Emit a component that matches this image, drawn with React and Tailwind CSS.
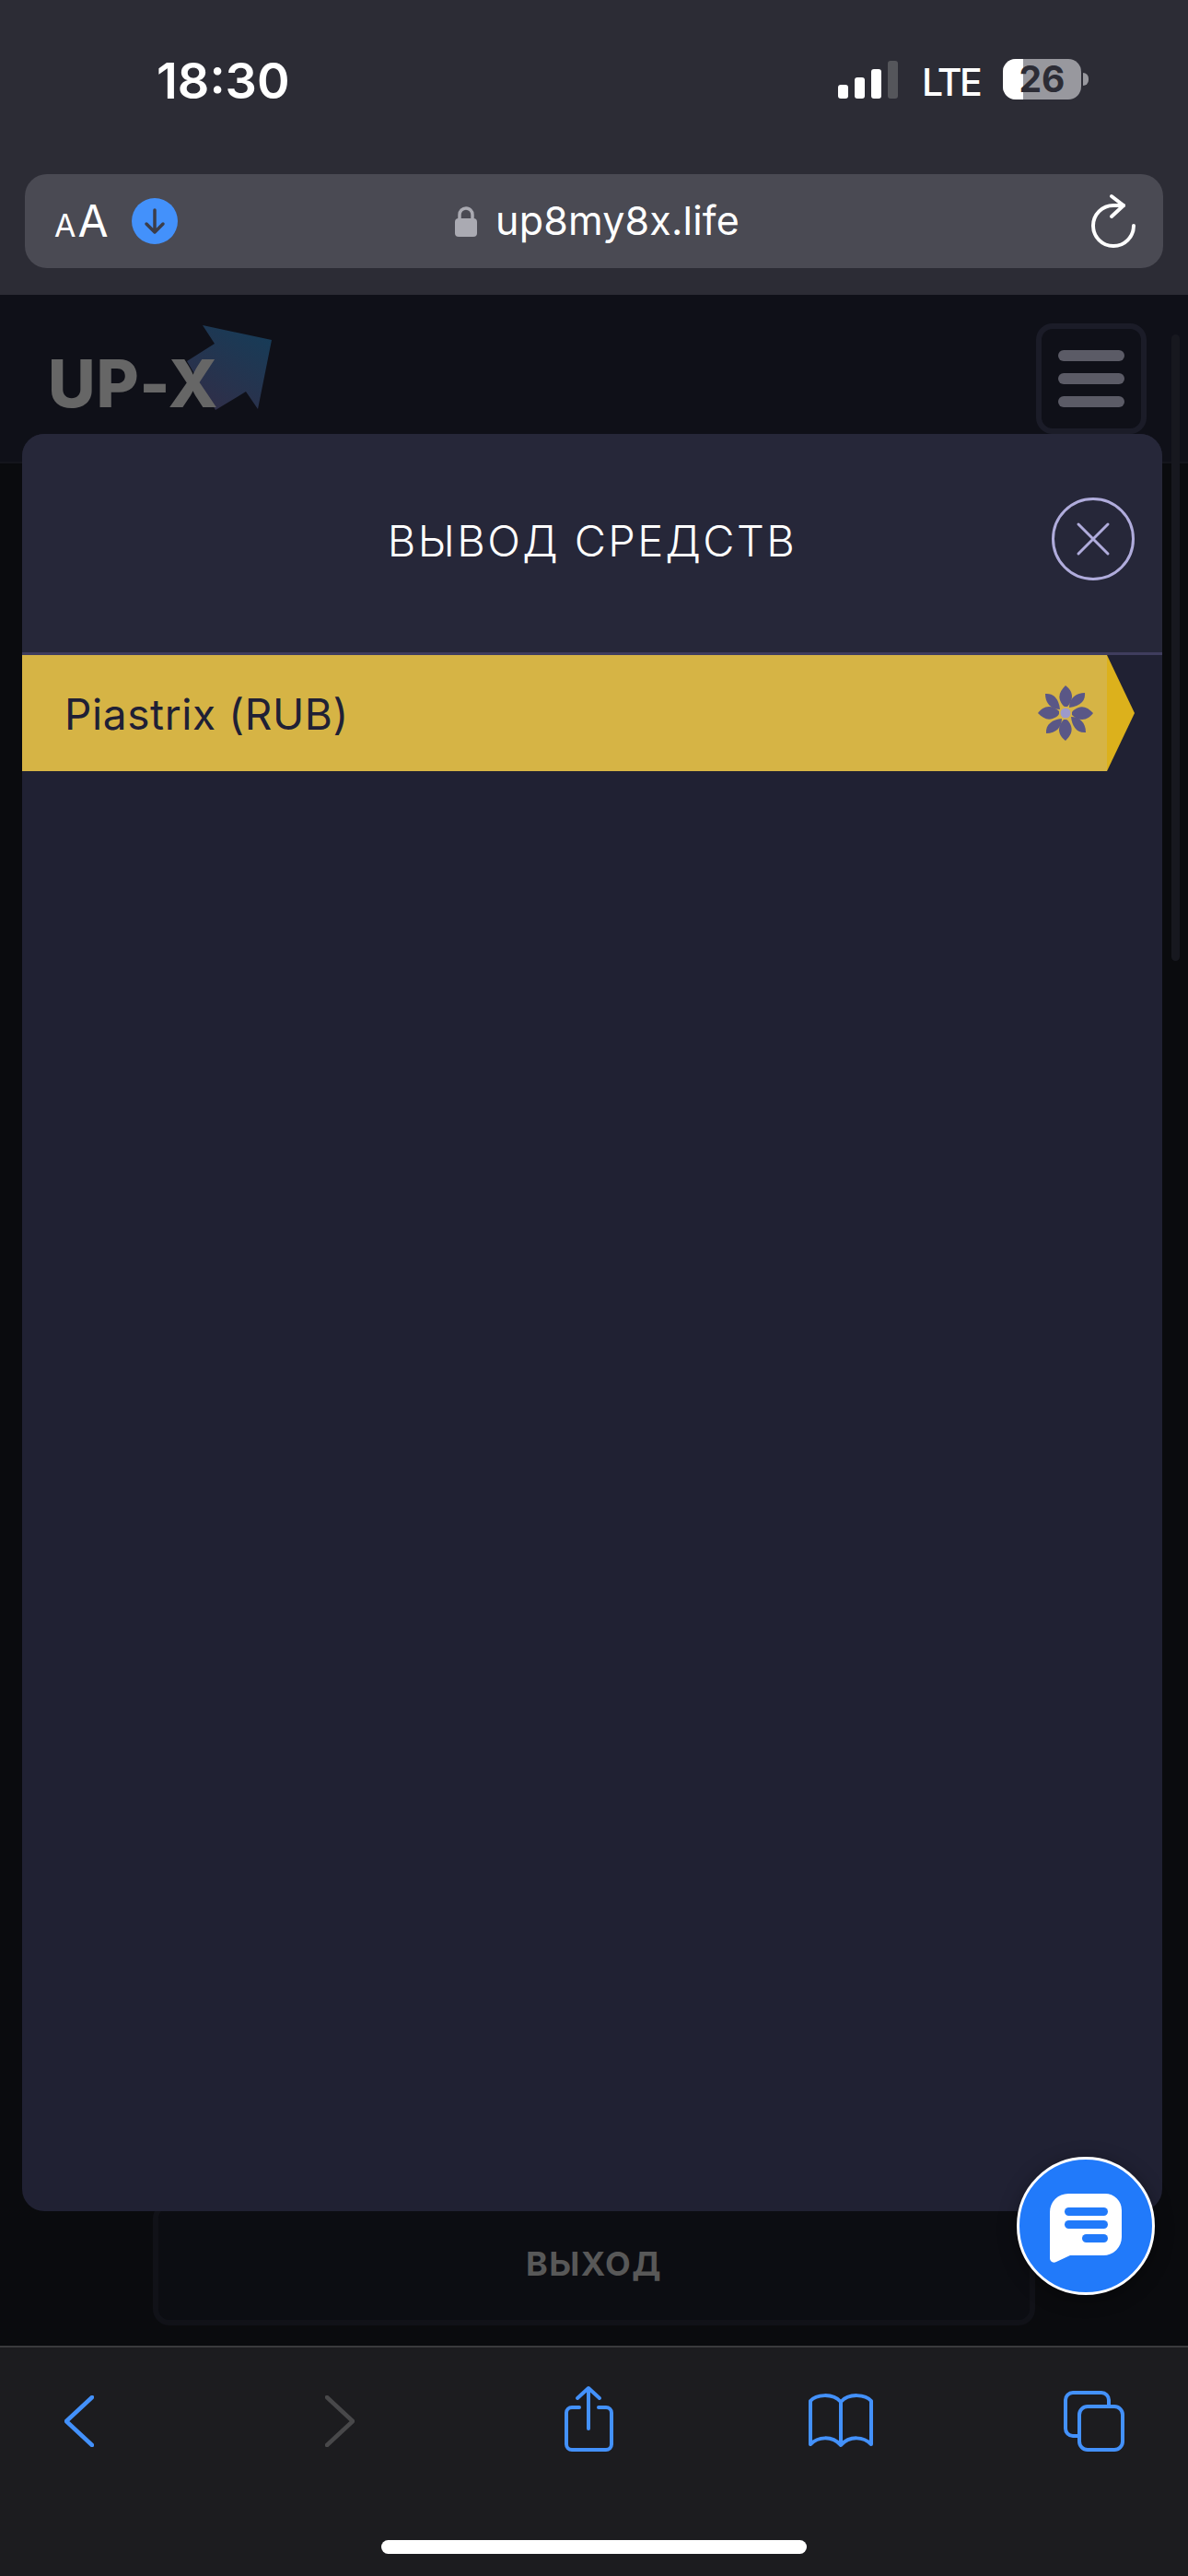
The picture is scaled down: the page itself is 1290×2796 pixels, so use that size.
const BLUE = '#4391fb';

function ReloadIcon() {
  return (
    <svg width="52" height="60" viewBox="0 0 52 60" fill="none" stroke="#fff" strokeWidth="4" strokeLinecap="round" strokeLinejoin="round">
      <path d="M46 35 A22 22 0 1 1 24 13 L35 13" />
      <path d="M22 3 L35 13 L22 25" />
    </svg>
  );
}

function StatusBar() {
  return (
    <div className="h-[189px] flex items-start text-white font-['Inter',sans-serif]">
      <div className="ml-[170px] mt-[58px] w-[143px] text-[54px] leading-[60px] font-semibold">18:30</div>

      {/* signal */}
      <div className="ml-[597px] mt-[66px] h-[41px] flex items-end gap-[7px]">
        <div className="w-[11px] h-[15px] rounded-[3px] bg-white" />
        <div className="w-[11px] h-[23px] rounded-[3px] bg-white" />
        <div className="w-[11px] h-[32px] rounded-[3px] bg-white" />
        <div className="w-[11px] h-[41px] rounded-[3px] bg-[#55565b]" />
      </div>

      <div className="ml-[26px] mt-[64px] w-[62px] text-[41px] leading-[50px] font-medium tracking-[-2.5px]">LTE</div>

      {/* battery */}
      <div className="ml-[26px] mt-[64px] flex items-center">
        <div className="relative w-[85px] h-[44px] rounded-[14px] bg-[#98989e] flex items-center justify-center">
          <div className="absolute left-0 top-0 bottom-0 w-[22px] rounded-l-[14px] bg-white" />
          <span className="relative text-[39px] leading-[44px] font-bold text-[#2c2c35]">26</span>
        </div>
        <div className="ml-[2px] w-[6px] h-[14px] rounded-r-full bg-[#98989e]" />
      </div>
    </div>
  );
}

function AddressBar() {
  return (
    <div className="mx-[27px] h-[102px] w-[1236px] rounded-[24px] bg-[#4a4a53] flex items-center text-white font-['Inter',sans-serif]">
      <div className="ml-[32px] mt-[4px] w-[60px] flex items-baseline font-normal">
        <span className="text-[34px] leading-[40px]">A</span>
        <span className="ml-[2px] text-[48px] leading-[40px]">A</span>
      </div>
      <div className="ml-[24px] w-[50px] h-[50px] rounded-full bg-[#4391fb] flex items-center justify-center">
        <svg width="26" height="30" viewBox="0 0 26 30" fill="none" stroke="#3c3d48" strokeWidth="3.5" strokeLinecap="round" strokeLinejoin="round">
          <path d="M13 3 V26 M4 18 L13 27 L22 18" />
        </svg>
      </div>
      <svg className="ml-[301px]" width="24" height="34" viewBox="0 0 24 34" fill="none">
        <path d="M5 15 V10 a7 7 0 0 1 14 0 V15" stroke="#aaaab2" strokeWidth="3.5" />
        <rect x="0" y="14" width="24" height="20" rx="4" fill="#aaaab2" />
      </svg>
      <div className="ml-[20px] text-[43px] leading-[50px] font-normal tracking-[0.2px] mt-[-2px]">up8my8x.life</div>
      <div className="ml-auto mr-[26px]">
        <ReloadIcon />
      </div>
    </div>
  );
}

function PageBehind() {
  return (
    <div className="flex-1 flex flex-col bg-[#0a0b0e]">
      <div className="h-[183px] bg-[#0f1018] border-b-2 border-[#14151c] flex items-start">
        <div className="relative ml-[52px] mt-[59px]">
          <svg className="absolute left-[149px] top-[-26px]" width="96" height="96" viewBox="0 0 96 96">
            <defs>
              <linearGradient id="logoArrow" x1="0.85" y1="0" x2="0.25" y2="1">
                <stop offset="0" stopColor="#163c58" />
                <stop offset="1" stopColor="#302e48" />
              </linearGradient>
            </defs>
            <polygon points="19,0 94,16 79,91 66,72 33,92 2,39 32,20" fill="url(#logoArrow)" />
          </svg>
          <div className="relative text-[71px] leading-[74px] font-extrabold tracking-[1px] text-[#666] font-['Inter',sans-serif]">UP-X</div>
        </div>
        <div className="ml-auto mr-[45px] mt-[31px] w-[120px] h-[120px] rounded-[18px] border-[6px] border-[#1b1c28] flex flex-col items-center justify-center gap-[13px]">
          <div className="w-[72px] h-[12px] rounded-full bg-[#5b5b66]" />
          <div className="w-[72px] h-[12px] rounded-full bg-[#5b5b66]" />
          <div className="w-[72px] h-[12px] rounded-full bg-[#5b5b66]" />
        </div>
      </div>

      <div className="mt-auto mb-[22px] ml-[166px] w-[958px] h-[134px] rounded-[18px] border-[6px] border-[#111218] bg-[#0c0d12] flex items-center justify-center">
        <span className="text-[36px] font-bold tracking-[1.5px] text-[#585858] font-['Inter',sans-serif]">ВЫХОД</span>
      </div>
    </div>
  );
}

function FlowerIcon() {
  return (
    <svg width="62" height="62" viewBox="-31 -31 62 62">
      {[0, 90, 180, 270].map((a) => (
        <g key={a} transform={`rotate(${a})`} fill="#5a5786">
          <path d="M0 -30 C-5 -25 -8 -20 -6 -14 C-5 -11 -3 -8 -1 -7 L2 -7 C5 -10 7 -14 7 -18 C7 -23 4 -27 0 -30Z" />
          <path d="M21 -22 C22 -12 14 -7 4 -6 C4 -15 10 -22 21 -22Z" />
        </g>
      ))}
      <circle r="5.5" fill="#9d9aca" />
    </svg>
  );
}

function WithdrawModal() {
  return (
    <div className="absolute left-[24px] top-[151px] w-[1238px] h-[1929px] rounded-[24px] overflow-hidden bg-[#202133] flex flex-col">
      <div className="relative h-[237px] bg-[#262739] flex items-center justify-center">
        <h2 className="mt-[-5px] text-[47px] font-light text-white tracking-[2.4px] font-['Inter',sans-serif]">ВЫВОД СРЕДСТВ</h2>
        <button className="absolute right-[30px] top-[69px] w-[90px] h-[90px] rounded-full border-[3px] border-[#b0acdc] flex items-center justify-center">
          <svg width="38" height="38" viewBox="0 0 38 38" stroke="#b0acdc" strokeWidth="3" strokeLinecap="round">
            <path d="M3 3 L35 35 M35 3 L3 35" />
          </svg>
        </button>
      </div>
      <div className="h-[3px] bg-[#3f3d5e]" />
      <div className="flex h-[126px]">
        <div className="w-[1178px] bg-[#d6b445] flex items-center pl-[46px] pr-[14px] justify-between">
          <span className="mt-[3px] text-[46px] font-normal tracking-[0.6px] text-[#1f2035] font-['Inter',sans-serif]">Piastrix (RUB)</span>
          <FlowerIcon />
        </div>
        <div className="w-[30px] bg-[#dcb11c] [clip-path:polygon(0_0,100%_50%,0_100%)]" />
      </div>
    </div>
  );
}

function ChatButton() {
  return (
    <button className="absolute left-[1104px] top-[2021px] w-[150px] h-[150px] rounded-full border-[3px] border-white bg-[#217afa] shadow-[0_4px_20px_rgba(0,0,0,0.35)] flex items-center justify-center">
      <svg className="mt-[5px]" width="78" height="76" viewBox="0 0 78 76">
        <path d="M20 0 H60 a18 18 0 0 1 18 18 V47 a20 20 0 0 1 -20 20 H22 L7 74 C3 76 0 73 0 70 V20 A20 20 0 0 1 20 0Z" fill="#fff" />
        <rect x="16" y="15" width="47" height="9" rx="4.5" fill="#217afa" />
        <rect x="16" y="29" width="47" height="9" rx="4.5" fill="#217afa" />
        <rect x="35" y="44" width="28" height="9" rx="4.5" fill="#217afa" />
      </svg>
    </button>
  );
}

function Toolbar() {
  return (
    <div className="h-[250px] bg-[#1c1c1f] border-t-2 border-[#3a3a3c] flex flex-col">
      <div className="flex items-start">
        <svg className="ml-[70px] mt-[52px]" width="32" height="56" viewBox="0 0 32 56" fill="none" stroke={BLUE} strokeWidth="4.5" strokeLinecap="round" strokeLinejoin="round">
          <path d="M30 2 L2 28 L30 54" />
        </svg>
        <svg className="ml-[251px] mt-[52px]" width="32" height="56" viewBox="0 0 32 56" fill="none" stroke="#48484a" strokeWidth="4.5" strokeLinecap="round" strokeLinejoin="round">
          <path d="M2 2 L30 28 L2 54" />
        </svg>
        <svg className="ml-[225px] mt-[41px]" width="58" height="74" viewBox="0 0 58 74" fill="none" stroke={BLUE} strokeWidth="4" strokeLinecap="round" strokeLinejoin="round">
          <path d="M19 24 H11 a6 6 0 0 0 -6 6 V64 a6 6 0 0 0 6 6 H48 a6 6 0 0 0 6 -6 V30 a6 6 0 0 0 -6 -6 H40" />
          <path d="M29 47 V4 M17 14 L29 3 L41 14" />
        </svg>
        <svg className="ml-[208px] mt-[48px]" width="74" height="62" viewBox="0 0 74 62" fill="none" stroke={BLUE} strokeWidth="4" strokeLinecap="round" strokeLinejoin="round">
          <path d="M4 10 C10 3 28 1 37 11 C46 1 64 3 70 10 V57 C62 49 47 47 37 58 C27 47 12 49 4 57 Z M37 11 V58" />
        </svg>
        <svg className="ml-[203px] mt-[45px]" width="70" height="69" viewBox="0 0 70 69" fill="none" stroke={BLUE} strokeWidth="4">
          <path d="M17 51 H12 a8 8 0 0 1 -8 -8 V12 a8 8 0 0 1 8 -8 H43 a8 8 0 0 1 8 8 V19" />
          <rect x="19" y="19" width="47" height="47" rx="9" />
        </svg>
      </div>
      <div className="mt-auto mb-[24px] mx-auto w-[462px] h-[15px] rounded-full bg-white" />
    </div>
  );
}

export default function App() {
  return (
    <div className="w-[1290px] h-[2796px] flex flex-col overflow-hidden bg-[#0a0b0e]">
      {/* Safari top chrome */}
      <div className="h-[320px] bg-[#2c2c35]">
        <StatusBar />
        <AddressBar />
      </div>

      {/* page under the modal */}
      <div className="relative flex-1 flex flex-col">
        <PageBehind />
        <div className="absolute left-[1272px] top-[43px] w-[9px] h-[680px] rounded-full bg-[#17181f]" />
        <WithdrawModal />
        <ChatButton />
      </div>

      <Toolbar />
    </div>
  );
}
